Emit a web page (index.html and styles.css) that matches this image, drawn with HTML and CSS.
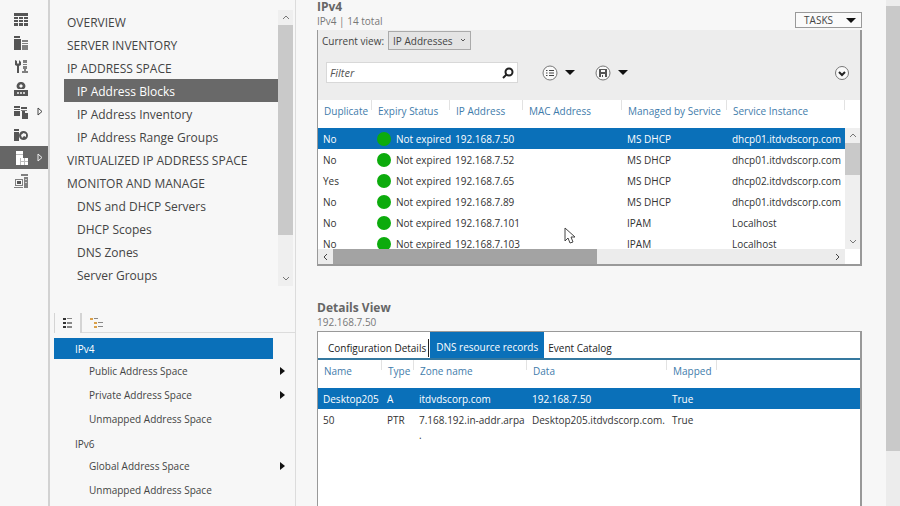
FILE: index.html
```html
<!DOCTYPE html>
<html lang="en">
<head>
    <meta charset="UTF-8">
    <meta name="viewport" content="width=device-width, initial-scale=1.0">
    <title>Server Manager - IPAM</title>
    <link rel="stylesheet" href="styles.css">
</head>
<body>

    <nav class="rail" aria-label="Roles">
        <a href="#" aria-label="Dashboard">
            <svg class="icon" viewBox="0 0 14 14"><path d="M0 0h14v3H0zM0 4h4v2H0zM5 4h4v2H5zM10 4h4v2h-4zM0 7h4v2H0zM5 7h4v2H5zM10 7h4v2h-4zM0 10h4v3H0zM5 10h4v3H5zM10 10h4v3h-4z"/></svg>
        </a>
        <a href="#" aria-label="Local Server">
            <svg class="icon" viewBox="0 0 14 14"><path d="M0 0h6v2H0zM0 3h7v11H0z"/><path class="soft" d="M8 4h6v2H8zM8 7h6v1H8zM8 9h6v5H8z"/></svg>
        </a>
        <a href="#" aria-label="All Servers">
            <svg class="icon" viewBox="0 0 14 14"><path d="M1 1l2 1v2l1 1 1-1V1l2 2v3L5 7v7H3V7L1 6z"/><path class="soft" d="M9 1h4v3H9zM9 5h4v1H9zM9 7h4v3H9zM10 10h2v2h2v2H8v-2h2z"/></svg>
        </a>
        <a href="#" aria-label="AD DS">
            <svg class="icon" viewBox="0 0 14 14"><path fill-rule="evenodd" d="M7 0a4 4 0 0 1 3 7H4a4 4 0 0 1 3-7zm0 2L5 4l2 2 2-2z"/><path d="M0 8h14v6H0z"/><path class="cut" d="M3 10h2v2H3zM6 10h2v2H6zM9 10h2v2H9z"/></svg>
        </a>
        <a href="#" class="has-arrow" aria-label="DHCP">
            <svg class="icon" viewBox="0 0 14 14"><path d="M0 1h6v2H0zM0 4h6v1H0zM0 6h6v5H0zM7 2h6v2H7zM8 6h3v2h3v6H8z"/><path class="soft" d="M7 5h6v1H7z"/></svg>
            <svg class="arrow" viewBox="0 0 6 9"><path d="M1 1v7l4-3.500z"/></svg>
        </a>
        <a href="#" aria-label="DNS">
            <svg class="icon" viewBox="0 0 14 14"><path d="M0 1h5v2H0zM0 4h5v9H0z"/><path fill-rule="evenodd" d="M9.500 3a4.500 4.500 0 1 1 0 9 4.500 4.500 0 0 1 0-9zm0 2L7 7l1 3 2-2 2 1V6z"/></svg>
        </a>
        <a href="#" class="has-arrow active" aria-label="File and Storage Services">
            <svg class="icon" viewBox="0 0 14 14"><path d="M2 0h7v7h1v3h1V7h3v7H2z"/><path class="line" d="M2 3.500h7M6.500 7v7M6 10.500h8M10.500 7v7"/></svg>
            <svg class="arrow" viewBox="0 0 6 9"><path d="M1 1v7l4-3.500z"/></svg>
        </a>
        <a href="#" aria-label="IPAM">
            <svg class="icon" viewBox="0 0 14 14"><path class="soft" fill-rule="evenodd" d="M7 0h7v2H7zM10 3h4v11h-4zM1 5h8v7H1zm1 1v5h6V6zM0 13h9v1H0z"/><path d="M3 7h4v3H3z"/><path class="cut" d="M11 5h2v1h-2zM11 8h2v1h-2z"/></svg>
        </a>
    </nav>

    <aside class="sidebar">
        <div class="menu-wrap">
            <ul class="menu">
                <li><a href="#">OVERVIEW</a></li>
                <li><a href="#">SERVER INVENTORY</a></li>
                <li><a href="#">IP ADDRESS SPACE</a></li>
                <li><a href="#" class="sub active">IP Address Blocks</a></li>
                <li><a href="#" class="sub">IP Address Inventory</a></li>
                <li><a href="#" class="sub">IP Address Range Groups</a></li>
                <li><a href="#">VIRTUALIZED IP ADDRESS SPACE</a></li>
                <li><a href="#">MONITOR AND MANAGE</a></li>
                <li><a href="#" class="sub">DNS and DHCP Servers</a></li>
                <li><a href="#" class="sub">DHCP Scopes</a></li>
                <li><a href="#" class="sub">DNS Zones</a></li>
                <li><a href="#" class="sub">Server Groups</a></li>
            </ul>
            <div class="scroll-v menu-scroll">
                <svg class="chev" viewBox="0 0 8 5"><path d="M1 4l3-3 3 3"/></svg>
                <div class="thumb"></div>
                <svg class="chev" viewBox="0 0 8 5"><path d="M1 1l3 3 3-3"/></svg>
            </div>
        </div>

        <div class="view-switch">
            <button type="button" class="current" aria-label="List view">
                <svg viewBox="0 0 10 10"><path class="dark" d="M0 0h3v2H0zM0 4h3v2H0zM0 8h3v2H0z"/><path class="grey" d="M4 0h5v1H4zM4 4h5v2H4zM4 8h5v2H4z"/></svg>
            </button>
            <button type="button" aria-label="Tree view">
                <svg class="wide" viewBox="0 0 13 10"><path class="orange" d="M0 0h3v2H0zM4 4h3v2H4zM4 8h3v2H4z"/><path class="grey" d="M4 0h4v1H4zM8 4h5v1H8zM8 8h5v1H8z"/></svg>
            </button>
            <span></span>
        </div>

        <ul class="tree">
            <li><a href="#" class="group active">IPv4</a></li>
            <li><a href="#" class="more">Public Address Space</a></li>
            <li><a href="#" class="more">Private Address Space</a></li>
            <li><a href="#">Unmapped Address Space</a></li>
            <li><a href="#" class="group">IPv6</a></li>
            <li><a href="#" class="more">Global Address Space</a></li>
            <li><a href="#">Unmapped Address Space</a></li>
        </ul>
    </aside>

    <main class="content">
        <header class="section-head">
            <div>
                <h2>IPv4</h2>
                <p>IPv4 | 14 total</p>
            </div>
            <button type="button" class="tasks">TASKS <span class="down"></span></button>
        </header>

        <section class="panel">
            <div class="view-row">
                <label for="view">Current view:</label>
                <div class="select-wrap">
                    <select id="view">
                        <option>IP Addresses</option>
                    </select>
                    <svg viewBox="0 0 6 4"><path d="M1 1l2 2 2-2"/></svg>
                </div>
            </div>
            <div class="filter-row">
                <div class="search">
                    <input type="text" placeholder="Filter" aria-label="Filter">
                    <button type="button" aria-label="Search">
                        <svg viewBox="0 0 12 12"><circle cx="7" cy="5" r="3.500"/><path d="M4.500 7.500L1 11"/></svg>
                    </button>
                </div>
                <button type="button" class="tool" aria-label="Query options">
                    <svg viewBox="0 0 16 16"><circle cx="8" cy="8" r="7"/><path class="lines" d="M4 5.500h1.500M7 5.500h5M4 8h1.500M7 8h5M4 10.500h1.500M7 10.500h5"/></svg>
                    <span class="down"></span>
                </button>
                <button type="button" class="tool" aria-label="Save query">
                    <svg viewBox="0 0 16 16"><circle cx="8" cy="8" r="7"/><path class="solid" fill-rule="evenodd" d="M4 4h8v8H4zm2 1v2h4V5zm0 4v3h1v-2h1v2h2V9z"/></svg>
                    <span class="down"></span>
                </button>
                <button type="button" class="tool expand" aria-label="Expand">
                    <svg viewBox="0 0 16 16"><circle cx="8" cy="8" r="6.500"/><path class="bold" d="M5 7l3 3 3-3"/></svg>
                </button>
            </div>

            <div class="grid-wrap">
                <table class="addresses">
                    <colgroup>
                        <col class="c-dup"><col class="c-exp"><col class="c-ip"><col class="c-mac"><col class="c-man"><col>
                    </colgroup>
                    <thead>
                        <tr>
                            <th>Duplicate</th>
                            <th>Expiry Status</th>
                            <th>IP Address</th>
                            <th>MAC Address</th>
                            <th>Managed by Service</th>
                            <th>Service Instance</th>
                        </tr>
                    </thead>
                    <tbody>
                        <tr class="selected"><td>No</td><td><i class="dot"></i>Not expired</td><td>192.168.7.50</td><td></td><td>MS DHCP</td><td>dhcp01.itdvdscorp.com</td></tr>
                        <tr><td>No</td><td><i class="dot"></i>Not expired</td><td>192.168.7.52</td><td></td><td>MS DHCP</td><td>dhcp01.itdvdscorp.com</td></tr>
                        <tr><td>Yes</td><td><i class="dot"></i>Not expired</td><td>192.168.7.65</td><td></td><td>MS DHCP</td><td>dhcp02.itdvdscorp.com</td></tr>
                        <tr><td>No</td><td><i class="dot"></i>Not expired</td><td>192.168.7.89</td><td></td><td>MS DHCP</td><td>dhcp01.itdvdscorp.com</td></tr>
                        <tr><td>No</td><td><i class="dot"></i>Not expired</td><td>192.168.7.101</td><td></td><td>IPAM</td><td>Localhost</td></tr>
                        <tr><td>No</td><td><i class="dot"></i>Not expired</td><td>192.168.7.103</td><td></td><td>IPAM</td><td>Localhost</td></tr>
                    </tbody>
                </table>
                <div class="scroll-v grid-scroll">
                    <svg class="chev" viewBox="0 0 8 5"><path d="M1 4l3-3 3 3"/></svg>
                    <div class="thumb"></div>
                    <svg class="chev" viewBox="0 0 8 5"><path d="M1 1l3 3 3-3"/></svg>
                </div>
            </div>
            <div class="scroll-h">
                <svg class="chev" viewBox="0 0 5 8"><path d="M4 1L1 4l3 3"/></svg>
                <div class="thumb"></div>
                <svg class="chev" viewBox="0 0 5 8"><path d="M1 1l3 3-3 3"/></svg>
            </div>
        </section>

        <header class="section-head details-head">
            <div>
                <h2>Details View</h2>
                <p>192.168.7.50</p>
            </div>
        </header>

        <section class="panel details">
            <div class="tabs" role="tablist">
                <button type="button" role="tab"><span>Configuration Details</span></button>
                <button type="button" role="tab" class="active" aria-selected="true">DNS resource records</button>
                <button type="button" role="tab">Event Catalog</button>
            </div>
            <table class="records">
                <colgroup>
                    <col class="c-name"><col class="c-type"><col class="c-zone"><col class="c-data"><col class="c-map"><col>
                </colgroup>
                <thead>
                    <tr><th>Name</th><th>Type</th><th>Zone name</th><th>Data</th><th>Mapped</th><th></th></tr>
                </thead>
                <tbody>
                    <tr class="selected"><td>Desktop205</td><td>A</td><td>itdvdscorp.com</td><td>192.168.7.50</td><td>True</td><td></td></tr>
                    <tr><td>50</td><td>PTR</td><td>7.168.192.in-addr.arpa<br>.</td><td>Desktop205.itdvdscorp.com.</td><td>True</td><td></td></tr>
                </tbody>
            </table>
        </section>
    </main>

    <div class="page-scroll"><div class="thumb"></div></div>

    <svg class="pointer" viewBox="0 0 12 18"><path d="M1 1v13l3-3 2 5 3-1-2-5h4z"/></svg>

</body>
</html>
```
FILE: styles.css
```css
* {
    box-sizing: border-box;
}
body {
    margin: 0;
    display: flex;
    height: 100vh;
    overflow: hidden;
    background: #f7f7f7;
    color: #444;
    font-family: "Open Sans", "Noto Sans", sans-serif;
    font-size: 10px;
}
ul {
    list-style: none;
    margin: 0;
    padding: 0;
}
a {
    color: inherit;
    text-decoration: none;
}
button, input, select {
    font: inherit;
    color: inherit;
    margin: 0;
    padding: 0;
    border: 0;
    background: none;
}

/* left icon rail */
.rail {
    flex: none;
    width: 48px;
    padding-top: 8px;
}
.rail a {
    display: flex;
    align-items: center;
    height: 23px;
    padding-left: 14px;
    gap: 9px;
}
.rail a.active {
    background: #666;
}
.rail .icon {
    width: 14px;
    height: 14px;
    fill: #555;
}
.rail .soft {
    fill: #808080;
}
.rail .cut {
    fill: #ccc;
}
.rail .line {
    fill: none;
    stroke: #bbb;
}
.rail .arrow {
    width: 6px;
    height: 9px;
    fill: none;
    stroke: #444;
}
.rail .active .icon {
    fill: #fff;
}
.rail .active .arrow {
    stroke: #eee;
}

/* navigation */
.sidebar {
    flex: none;
    width: 248px;
    border-left: 2px solid #d2d2d2;
    border-right: 1px solid #dcdcdc;
}
.menu-wrap {
    display: flex;
    padding: 10px 2px 0 14px;
}
.menu {
    flex: 1;
    font-size: 12px;
}
.menu a {
    display: block;
    height: 23px;
    line-height: 25px;
    padding-left: 3px;
    white-space: nowrap;
}
.menu a.sub {
    padding-left: 13px;
}
.menu a.active {
    background: #696969;
    color: #fff;
}
.view-switch {
    display: flex;
    height: 20px;
    margin: 27px 0 0 4px;
}
.view-switch button {
    width: 28px;
    border-bottom: 1px solid #dcdcdc;
}
.view-switch button.current {
    border: solid #d4d4d4;
    border-width: 0 2px 0 1px;
}
.view-switch span {
    flex: 1;
    border-bottom: 1px solid #dcdcdc;
}
.view-switch svg {
    display: block;
    width: 10px;
    height: 10px;
    margin: auto;
}
.view-switch svg.wide {
    width: 13px;
}
.dark {
    fill: #333;
}
.grey {
    fill: #888;
}
.orange {
    fill: #d9a04a;
}
.tree {
    margin: 5px 10px 0 4px;
}
.tree a {
    display: flex;
    align-items: center;
    justify-content: space-between;
    height: 24px;
    padding-left: 35px;
}
.tree a.group {
    height: 21px;
    margin: 2px 12px 0 0;
    padding-left: 21px;
}
.tree a.active {
    margin-top: 0;
    background: #0a70b9;
    color: #fff;
}
.tree a.more::after {
    content: "";
    border: 4px solid transparent;
    border-left: 5px solid #111;
    border-right: 0;
}

/* scrollbars */
.scroll-v {
    display: flex;
    flex-direction: column;
    align-items: center;
    width: 15px;
    background: #efefef;
}
.scroll-v .thumb {
    width: 100%;
    background: #c9c9c9;
}
.chev {
    flex: none;
    width: 8px;
    height: 5px;
    margin: 5px 0;
    fill: none;
    stroke: #777;
}
.scroll-v .chev:last-child {
    margin-top: auto;
}
.menu-scroll .thumb {
    height: 76%;
}
.grid-scroll .thumb {
    height: 32px;
}
.scroll-h {
    display: flex;
    align-items: center;
    height: 15px;
    margin-right: 15px;
    background: #ececec;
}
.scroll-h .chev {
    width: 5px;
    height: 8px;
    margin: 0 5px;
    stroke: #444;
}
.scroll-h .chev:last-child {
    margin-left: auto;
}
.scroll-h .thumb {
    width: 50%;
    height: 100%;
    background: #a3a3a3;
}
.page-scroll {
    flex: none;
    width: 14px;
    padding-top: 6px;
    background: #ececec;
}
.page-scroll .thumb {
    height: 89%;
    background: #c9c9c9;
}

/* main area */
.content {
    flex: 1;
    min-width: 0;
    display: flex;
    flex-direction: column;
    padding: 0 24px 0 21px;
}
.section-head {
    display: flex;
    justify-content: space-between;
    align-items: flex-end;
    height: 30px;
    padding-bottom: 2px;
}
.section-head h2 {
    margin: 0;
    font-size: 12px;
    line-height: 14px;
    color: #666;
}
.section-head p {
    margin: 0;
    line-height: 14px;
    color: #777;
}
.details-head {
    height: 31px;
    margin-top: 34px;
}
.tasks {
    display: flex;
    align-items: center;
    gap: 13px;
    height: 16px;
    padding: 0 5px 0 8px;
    border: 1px solid #999;
    background: #fafafa;
}
.down {
    border: 5px solid transparent;
    border-top-color: #111;
    border-bottom: 0;
}
.panel {
    border: 1px solid #999;
    border-right-width: 2px;
    border-bottom-width: 2px;
    background: #fff;
}
.section-head + .panel:not(.details) {
    border-top: 0;
}
.view-row {
    display: flex;
    align-items: center;
    gap: 4px;
    padding: 1px 0 0 4px;
    background: #ededed;
}
.select-wrap {
    position: relative;
}
.select-wrap select {
    display: block;
    appearance: none;
    width: 83px;
    height: 19px;
    padding-left: 4px;
    border: 1px solid #aaa;
    background: #e4e4e4;
}
.select-wrap svg {
    position: absolute;
    top: 7px;
    right: 5px;
    width: 6px;
    height: 4px;
    fill: none;
    stroke: #555;
}
.filter-row {
    display: flex;
    align-items: center;
    padding: 12px 10px 17px 8px;
    background: #ededed;
}
.search {
    display: flex;
    width: 192px;
    height: 21px;
    margin-right: 24px;
    border: 1px solid #d8d8d8;
    background: #fff;
    font-size: 11px;
}
.search input {
    flex: 1;
    min-width: 0;
    padding-left: 3px;
    outline: 0;
}
.search input::placeholder {
    color: #555;
    font-style: italic;
}
.search button {
    width: 18px;
}
.search svg {
    display: block;
    width: 12px;
    height: 12px;
    margin: auto;
    fill: none;
    stroke: #222;
    stroke-width: 2;
}
.tool {
    display: flex;
    align-items: center;
    gap: 7px;
    margin-right: 20px;
}
.tool svg {
    width: 16px;
    height: 16px;
    fill: #fafafa;
    stroke: #777;
}
.tool .lines {
    stroke: #444;
}
.tool .solid {
    fill: #555;
    stroke: none;
}
.tool .bold {
    fill: none;
    stroke: #222;
    stroke-width: 2;
}
.tool.expand {
    margin: 0 0 0 auto;
}

/* tables */
table {
    width: 100%;
    table-layout: fixed;
    border-collapse: collapse;
}
th {
    height: 28px;
    padding: 4px 0 0 6px;
    vertical-align: top;
    text-align: left;
    font-weight: normal;
    line-height: 15px;
    color: #3f7cab;
    white-space: nowrap;
    background: linear-gradient(#e2e2e2, #e2e2e2) right top / 1px 10px no-repeat;
}
td {
    height: 21px;
    padding: 4px 0 0 5px;
    vertical-align: top;
    line-height: 15px;
    white-space: nowrap;
    color: #333;
}
.selected td {
    background: #0a70b9;
    color: #fff;
}
.grid-wrap {
    display: flex;
    height: 149px;
    overflow: hidden;
}
.addresses {
    flex: 1;
    min-width: 0;
    align-self: flex-start;
}
.grid-scroll {
    margin-top: 28px;
}
.c-dup {
    width: 54px;
}
.c-exp {
    width: 78px;
}
.c-ip {
    width: 73px;
}
.c-mac {
    width: 99px;
}
.c-man {
    width: 105px;
}
.dot {
    display: inline-block;
    width: 14px;
    height: 14px;
    margin-right: 5px;
    border-radius: 50%;
    background: #0cab0c;
    vertical-align: top;
}
.details {
    flex: 1;
    border-bottom: 0;
}
.tabs {
    display: flex;
    height: 28px;
    border-bottom: 2px solid #35789f;
}
.tabs button {
    padding: 5px 4px 0;
    color: #222;
}
.tabs button:first-child {
    padding: 5px 1px 0 10px;
}
.tabs span {
    display: block;
    padding: 2px 2px 2px 0;
    border-right: 1px solid #222;
}
.tabs button.active {
    padding: 3px 6px 0;
    background: #0a70b9;
    color: #fff;
}
.c-name {
    width: 64px;
}
.c-type {
    width: 32px;
}
.c-zone {
    width: 113px;
}
.c-data {
    width: 140px;
}
.c-map {
    width: 50px;
}
.records th:last-child {
    background: none;
}

/* mouse pointer */
.pointer {
    position: absolute;
    left: 564px;
    top: 227px;
    width: 12px;
    height: 18px;
    fill: #fff;
    stroke: #444;
}
```
